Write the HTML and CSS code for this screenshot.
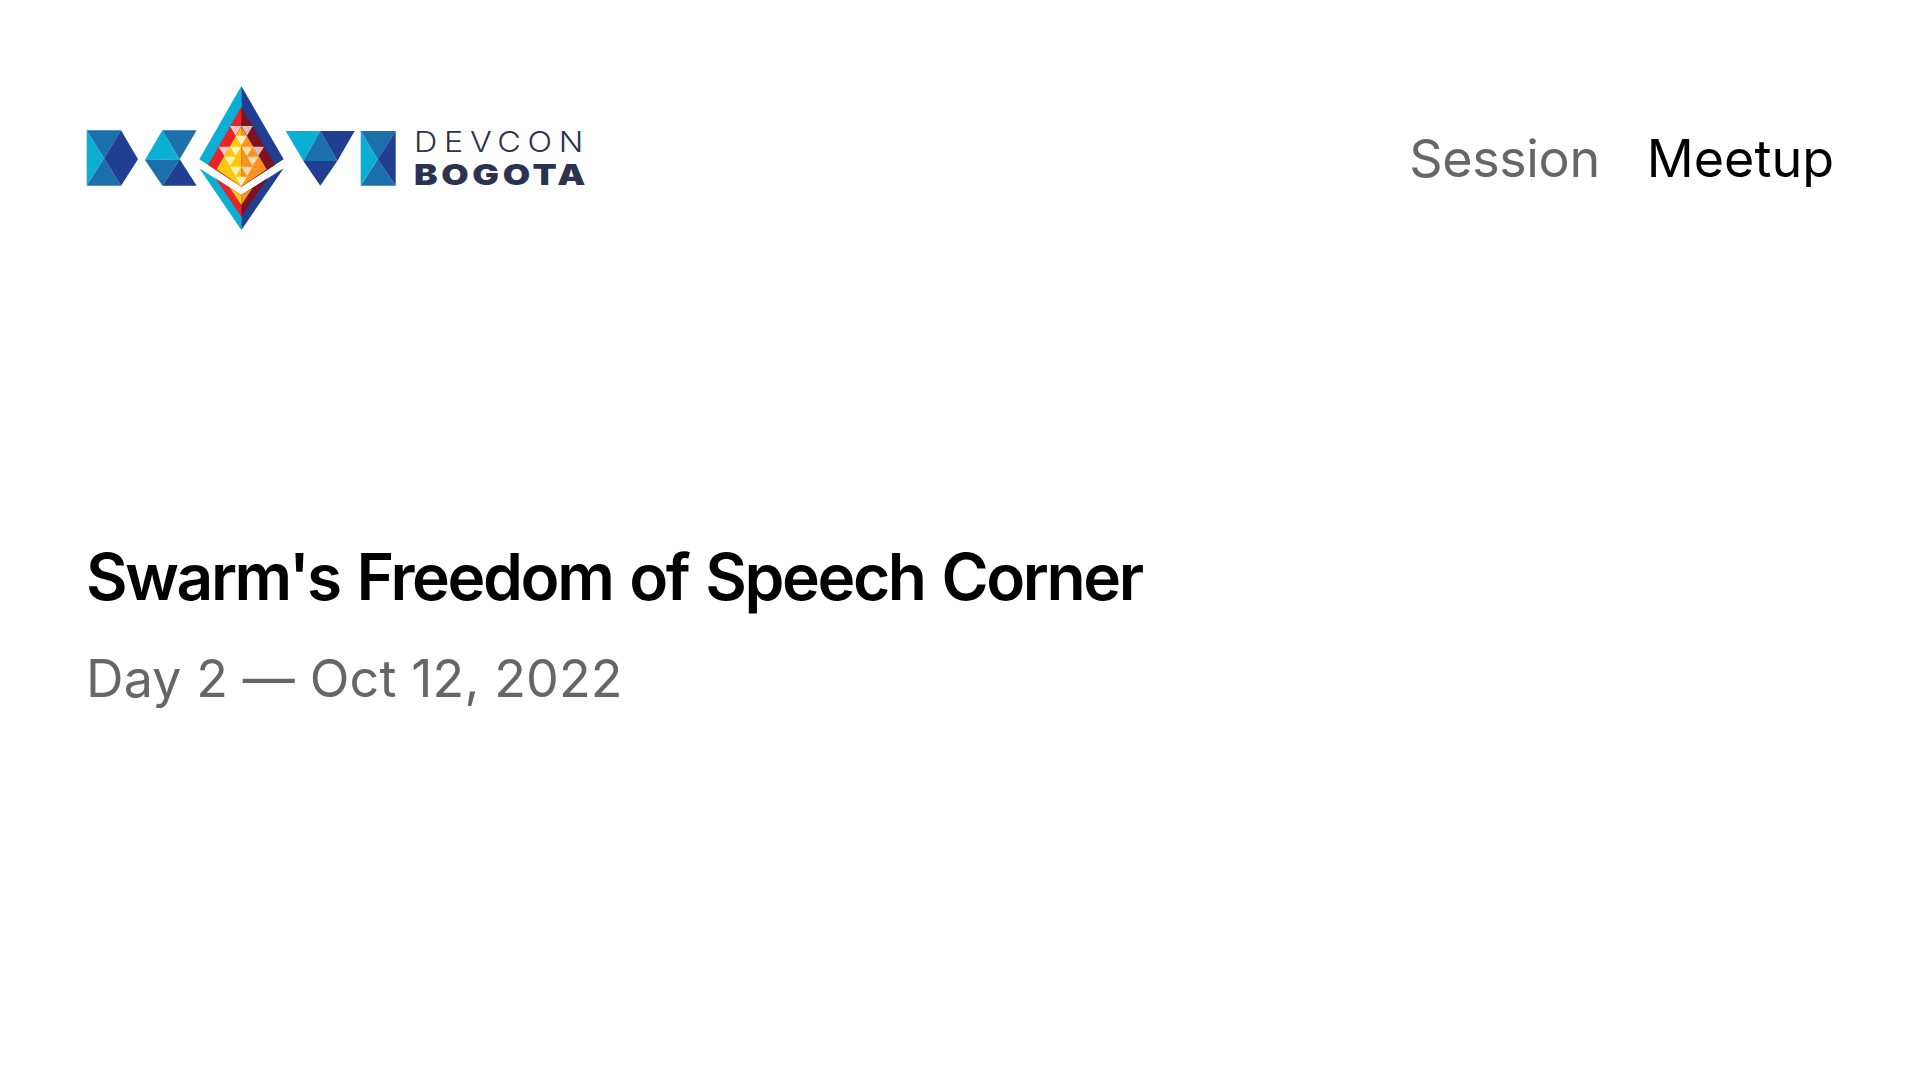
FILE: index.html
```html
<!DOCTYPE html>
<html lang="en">

<head>
  <title>Swarm's Freedom of Speech Corner</title>
  <link rel="stylesheet" href="styles.css">
</head>

<body>

  <header class="top-bar">
    <svg class="logo" width="500" height="150" viewBox="86 85 500 150">
      <g transform="translate(70 70) scale(0.33333)">
        <!-- left hex -->
        <polygon class="cyan" points="50,181 102,265 50,347" />
        <polygon class="mid" points="50,181 153,181 102,265" />
        <polygon class="mid" points="50,347 102,265 153,347" />
        <polygon class="dark" points="153,181 204,268 153,347 102,265" />

        <!-- second block -->
        <polygon class="cyan" points="277,181 329,268 225,270" />
        <polygon class="mid" points="277,181 380,181 329,268" />
        <polygon class="mid" points="225,270 329,268 277,347" />
        <polygon class="dark" points="329,268 380,347 277,347" />

        <!-- diamond, upper part -->
        <polygon class="cyan" points="514,48 388,268 514,350" />
        <polygon class="dark" points="514,48 641,268 514,350" />
        <polygon class="red" points="514,110 414,285 514,350" />
        <polygon class="maroon" points="514,110 615,285 514,350" />
        <polygon class="yellow" points="514,170 440,298 514,350" />
        <polygon class="orange" points="514,170 590,298 514,350" />
        <polygon class="pink" points="480,168 514,168 497,197" />
        <polygon class="rose" points="514,168 548,168 531,197" />
        <polygon class="pale" points="497,197 531,197 514,226" />
        <polygon class="pink" points="446,230 480,230 463,258" />
        <polygon class="rose" points="548,230 582,230 565,258" />
        <polygon class="pale" points="480,230 514,230 497,258" />
        <polygon class="peach" points="514,230 548,230 531,258" />
        <polygon class="pale" points="463,260 497,260 480,288" />
        <polygon class="peach" points="531,260 565,260 548,288" />
        <polygon class="pale" points="480,290 514,290 497,318" />
        <polygon class="peach" points="514,290 548,290 531,318" />
        <polygon class="pale" points="497,320 531,320 514,348" />

        <!-- diamond, lower part -->
        <polygon class="cyan" points="388,295 514,375 514,480" />
        <polygon class="dark" points="641,295 514,375 514,480" />
        <polygon class="red" points="436,325 514,375 514,440" />
        <polygon class="maroon" points="592,325 514,375 514,440" />
        <polygon class="yellow" points="480,353 514,375 514,405" />
        <polygon class="orange" points="548,353 514,375 514,405" />

        <!-- v shape -->
        <polygon class="cyan" points="647,183 751,183 700,273" />
        <polygon class="mid" points="751,183 802,273 700,273" />
        <polygon class="dark" points="751,183 854,183 802,273" />
        <polygon class="dark" points="700,273 802,273 751,347" />

        <!-- right block -->
        <polygon class="mid" points="872,183 977,183 923,268" />
        <polygon class="mid" points="872,347 923,268 977,347" />
        <polygon class="cyan" points="872,183 923,268 872,347" />
        <polygon class="dark" points="977,183 977,347 923,268" />
      </g>
      <text class="logo-top" x="414" y="152" textLength="176" lengthAdjust="spacingAndGlyphs">DEVCON</text>
      <text class="logo-bottom" x="414" y="185" textLength="175" lengthAdjust="spacingAndGlyphs">BOGOTA</text>
    </svg>

    <nav class="tabs">
      <a class="tab">Session</a>
      <a class="tab tab-active">Meetup</a>
    </nav>
  </header>

  <main class="content">
    <h1>Swarm's Freedom of Speech Corner</h1>
    <p class="date">Day 2 — Oct 12, 2022</p>
  </main>

</body>

</html>
```

FILE: styles.css
```css
body {
  margin: 0;
  background-color: white;
  font-family: Inter, "Liberation Sans", sans-serif;
}

.top-bar {
  display: flex;
  justify-content: space-between;
  align-items: center;
  padding: 85px 86px 0 86px;
}

.logo {
  display: block;
}

.logo-top {
  font-family: Inter, sans-serif;
  font-size: 29px;
  font-weight: 300;
  letter-spacing: 6px;
  fill: #2b3350;
}

.logo-bottom {
  font-family: Inter, sans-serif;
  font-size: 29px;
  font-weight: 900;
  letter-spacing: 3px;
  fill: #2b3350;
}

.cyan { fill: #0bafd3; }
.mid { fill: #1b70ab; }
.dark { fill: #213f92; }
.red { fill: #e5242c; }
.maroon { fill: #7e1220; }
.yellow { fill: #fdc80b; }
.orange { fill: #f8931f; }
.pink { fill: #f9c6c8; }
.rose { fill: #dfb9bc; }
.pale { fill: #fff0c0; }
.peach { fill: #fdd9b4; }

.tabs {
  display: flex;
  gap: 47px;
  margin-bottom: 4px;
}

.tab {
  font-size: 52px;
  letter-spacing: -0.35px;
  color: #666666;
}

.tab-active {
  letter-spacing: 0;
  color: black;
}

.content {
  padding: 303px 86px 0;
}

h1 {
  margin: 0;
  font-size: 64px;
  font-weight: 600;
  color: black;
  letter-spacing: -2.36px;
  word-spacing: 3px;
}

.date {
  margin: 32px 0 0;
  font-size: 52px;
  letter-spacing: 0.12px;
  color: #666666;
}
```
